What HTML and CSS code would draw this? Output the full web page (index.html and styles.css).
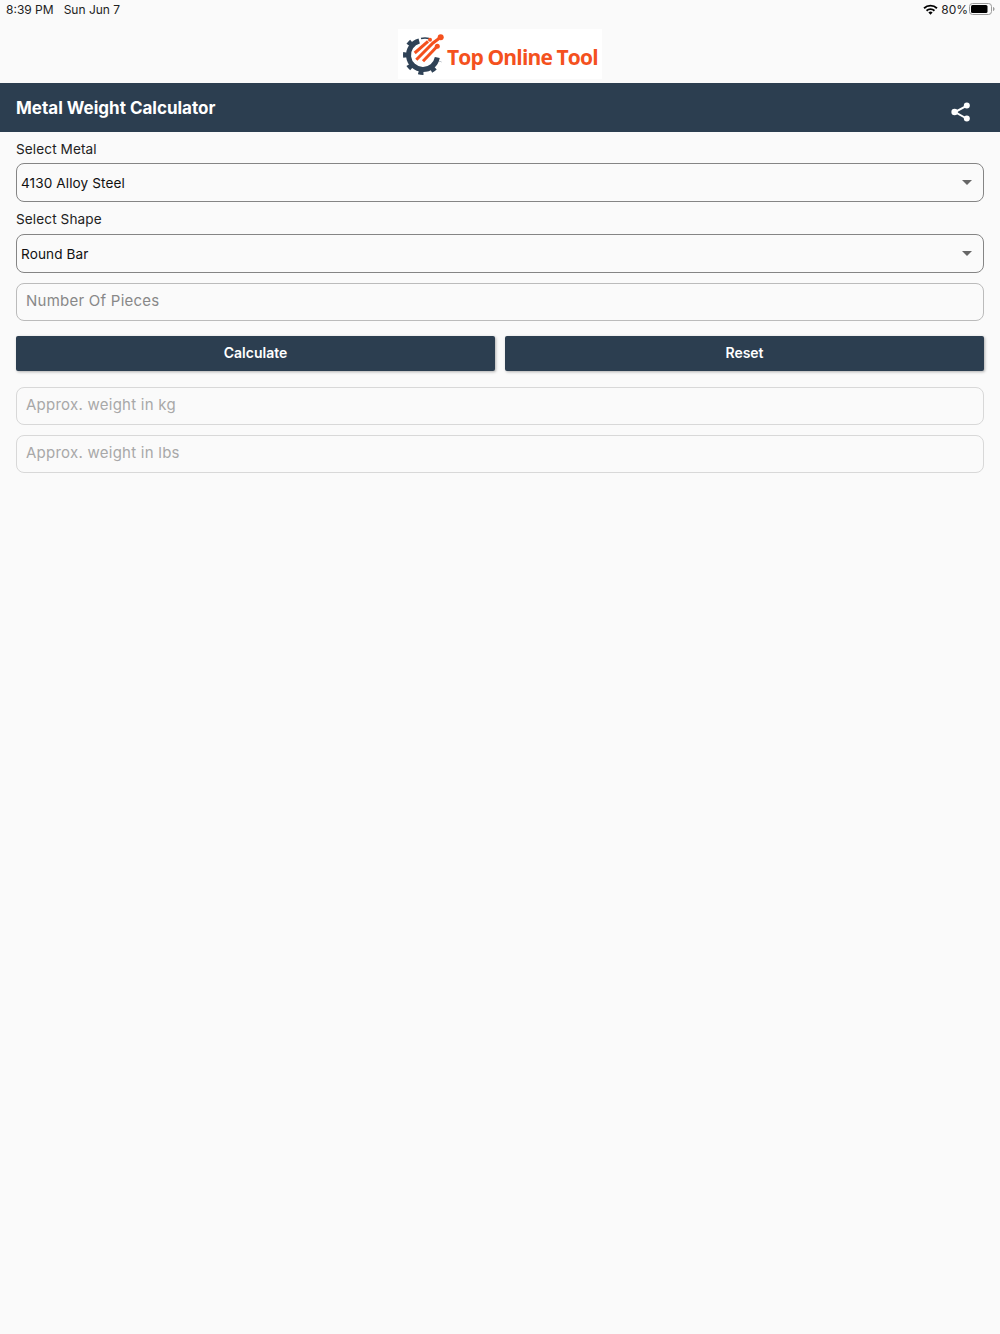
FILE: index.html
```html
<!DOCTYPE html>
<html lang="en">
<head>
    <meta charset="UTF-8">
    <meta name="viewport" content="width=device-width, initial-scale=1.0">
    <title>Metal Weight Calculator</title>
    <link rel="stylesheet" href="styles.css">
</head>
<body>
    <div class="status-bar">
        <div class="status-left">
            <span>8:39 PM</span>
            <span>Sun Jun 7</span>
        </div>
        <div class="status-right">
            <svg class="wifi" width="15" height="11" viewBox="0 0 15 11">
                <path d="M0.4 3.6A10 10 0 0 1 14.6 3.6L13.3 5A8.1 8.1 0 0 0 1.7 5Z"/>
                <path d="M2.9 6.1A6.5 6.5 0 0 1 12.1 6.1L10.8 7.5A4.6 4.6 0 0 0 4.2 7.5Z"/>
                <path d="M5.4 8.6A3 3 0 0 1 9.6 8.6L7.5 10.8Z"/>
            </svg>
            <span>80%</span>
            <svg class="battery" width="26" height="12" viewBox="0 0 26 12">
                <rect x="0.5" y="0.5" width="22" height="11" rx="3" fill="none" stroke="#9a9a9a"/>
                <rect x="2" y="2" width="16.5" height="8" rx="1.5" fill="#000"/>
                <path d="M24 4V8C25 7.7 25.5 7 25.5 6S25 4.3 24 4Z" fill="#9a9a9a"/>
            </svg>
        </div>
    </div>

    <div class="logo-row">
        <div class="logo">
            <svg class="logo-icon" width="42" height="44" viewBox="0 0 42 44">
                <!-- gear -->
                <path d="M16.2 9A14.5 14.5 0 1 0 34.3 25.5" fill="none" stroke="#2f4256" stroke-width="5"/>
                <path d="M8.4 9.2A18 18 0 1 0 36.9 29.2" fill="none" stroke="#2f4256" stroke-width="4" stroke-dasharray="5 8"/>
                <path d="M18 6.5A17 17 0 0 1 26 6.5" fill="none" stroke="#2f4256" stroke-width="1.6"/>
                <!-- orange lines -->
                <g stroke="#f4511e" stroke-width="3" fill="none">
                    <path d="M11.7 21L25 9.3"/>
                    <path d="M13.3 27.7L30 11L37.7 5.3"/>
                    <path d="M20 29.3L34.3 14.3"/>
                </g>
                <circle cx="27" cy="7.7" r="2" fill="#f4511e"/>
                <circle cx="37.7" cy="5.3" r="3" fill="#f4511e"/>
                <circle cx="34.3" cy="14.3" r="2.5" fill="#f4511e"/>
            </svg>
            <span class="logo-text">Top Online Tool</span>
        </div>
    </div>

    <header class="app-header">
        <h1>Metal Weight Calculator</h1>
        <svg class="share" width="20" height="20" viewBox="0 0 20 20">
            <path d="M15.5 3.8L4 10L15.5 16.5" fill="none" stroke="#fff" stroke-width="2"/>
            <circle cx="15.8" cy="3.6" r="3" fill="#fff"/>
            <circle cx="3.6" cy="10" r="3.2" fill="#fff"/>
            <circle cx="15.8" cy="16.6" r="3" fill="#fff"/>
        </svg>
    </header>

    <main class="form">
        <div class="label">Select Metal</div>
        <div class="select">
            <span>4130 Alloy Steel</span>
            <i class="caret"></i>
        </div>

        <div class="label label-shape">Select Shape</div>
        <div class="select">
            <span>Round Bar</span>
            <i class="caret"></i>
        </div>

        <div class="input pieces">Number Of Pieces</div>

        <div class="buttons">
            <button>Calculate</button>
            <button>Reset</button>
        </div>

        <div class="input result">Approx. weight in kg</div>
        <div class="input result">Approx. weight in lbs</div>
    </main>
</body>
</html>
```

FILE: styles.css
```css
/* General Styles */
* {
    box-sizing: border-box;
}

body {
    margin: 0;
    min-height: 1334px;
    background: #fafafa;
    color: #111;
    font-family: 'Inter', 'Liberation Sans', sans-serif;
}

.status-bar {
    height: 20px;
    padding: 0 5px 2px 6px;
    display: flex;
    justify-content: space-between;
    align-items: center;
    font-size: 12px;
    color: #222;
}

.status-left {
    display: flex;
    gap: 10px;
}

.status-right {
    display: flex;
    align-items: center;
    gap: 4px;
}

.wifi {
    margin-right: -1px;
}

.battery {
    margin-left: -3px;
}

.logo-row {
    height: 63px;
    padding-top: 9px;
    display: flex;
    justify-content: center;
}

.logo {
    width: 204px;
    height: 50px;
    padding-left: 5px;
    background: #fff;
    display: flex;
    align-items: center;
    gap: 2px;
}

.logo-icon {
    flex-shrink: 0;
}

.logo-text {
    margin-top: 6px;
    font-family: 'Open Sans', sans-serif;
    font-size: 21px;
    font-weight: 700;
    letter-spacing: -0.85px;
    white-space: nowrap;
    color: #f4511e;
}

.app-header {
    height: 49px;
    padding: 0 29px 0 16px;
    background: #2c3e50;
    display: flex;
    justify-content: space-between;
    align-items: center;
}

.app-header h1 {
    margin: 0;
    font-size: 17px;
    font-weight: 700;
    color: #fff;
}

.share {
    margin-top: 8px;
}

.form {
    padding: 0 16px;
}

.label {
    height: 31px;
    padding-top: 9px;
    font-size: 13.6px;
    line-height: 17px;
    letter-spacing: 0.1px;
    color: #222;
}

.label-shape {
    height: 32px;
}

.select {
    height: 39px;
    padding: 0 11px 0 5px;
    border: 1px solid #858585;
    border-radius: 8px;
    display: flex;
    justify-content: space-between;
    align-items: center;
    font-size: 13.6px;
    letter-spacing: 0.1px;
}

.select span {
    margin-left: -1px;
}

.caret {
    width: 0;
    height: 0;
    border-left: 5px solid transparent;
    border-right: 5px solid transparent;
    border-top: 5px solid #666;
}

.input {
    height: 38px;
    padding: 0 9px 4px;
    border: 1px solid #bbb;
    border-radius: 8px;
    display: flex;
    align-items: center;
    font-size: 15px;
    letter-spacing: 0.25px;
    color: #888;
}

.pieces {
    margin-top: 10px;
}

.result {
    margin-bottom: 10px;
    border-color: #d8d8d8;
    color: #a8a8a8;
}

.buttons {
    margin: 15px 0 16px;
    display: flex;
    gap: 10px;
}

.buttons button {
    flex: 1;
    height: 35px;
    padding-bottom: 4px;
    border: none;
    border-radius: 2px;
    background: #2c3e50;
    color: #fff;
    font-family: inherit;
    font-size: 14px;
    font-weight: 600;
    box-shadow: 1px 1px 3px rgba(0, 0, 0, 0.3);
}
```
